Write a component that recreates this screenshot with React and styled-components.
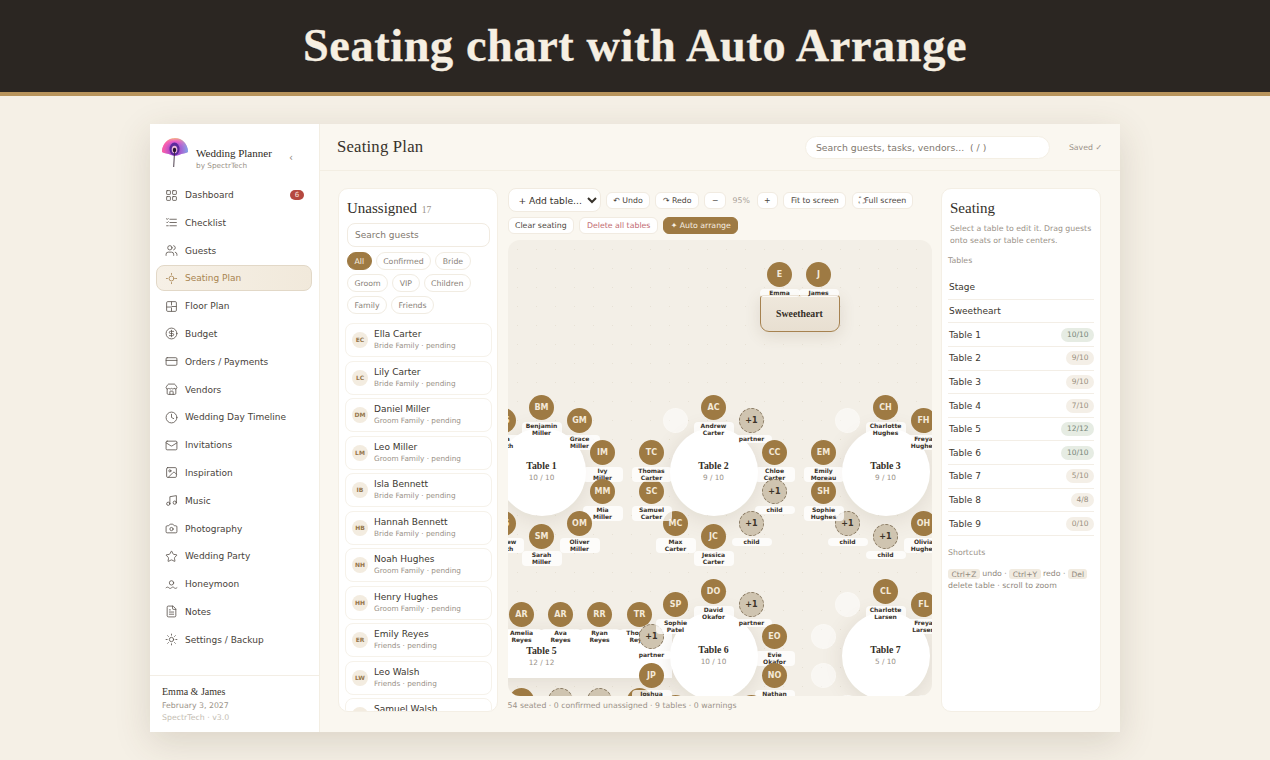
import React from "react";
import styled, { createGlobalStyle } from "styled-components";
import {
  LayoutGrid, Users, CircleDollarSign, CreditCard, Store, Clock, Mail,
  Image, Music, Camera, Star, FileText, Sun,
} from "lucide-react";

const SANS = `"DejaVu Sans", sans-serif`;
const SERIF = `"Liberation Serif", serif`;

const GlobalStyle = createGlobalStyle`
  html, body { margin: 0; padding: 0; background: #f5f0e6; }
  * { box-sizing: border-box; }
  body { font-family: ${SANS}; width: 1270px; height: 760px; overflow: hidden; }
`;

/* small custom icons lucide has no match for */
const ChecklistIcon = (p) => (
  <svg {...p} viewBox="0 0 24 24" fill="none" stroke="currentColor" strokeWidth="1.5" strokeLinecap="round">
    <path d="M9 6h12M9 12h12M9 18h12M3 5l1 1.500L6 4.500M3 11.500l1 1 2-2M3 18h3" />
  </svg>
);
const SeatIcon = (p) => (
  <svg {...p} viewBox="0 0 24 24" fill="none" stroke="currentColor" strokeWidth="1.5" strokeLinecap="round">
    <circle cx="12" cy="12" r="4.500" />
    <path d="M12 2.500v2M12 19.500v2M2.500 12h2M19.500 12h2" />
  </svg>
);
const FloorIcon = (p) => (
  <svg {...p} viewBox="0 0 24 24" fill="none" stroke="currentColor" strokeWidth="1.6">
    <rect x="3" y="3" width="18" height="18" rx="2" />
    <path d="M12 3v7M12 14v7M3 13h9M12 12h9" />
  </svg>
);
const MoonIcon = (p) => (
  <svg {...p} viewBox="0 0 24 24" fill="none" stroke="currentColor" strokeWidth="1.5" strokeLinecap="round">
    <circle cx="12" cy="9" r="4" />
    <path d="M2 18c2-1.600 3.500-1.600 5 0s3.500 1.600 5 0 3.500-1.600 5 0 3 1.600 5 0" />
  </svg>
);
const Logo = () => (
  <svg width="26" height="31" viewBox="0 0 26 31">
    <defs>
      <radialGradient id="fan" cx="50%" cy="70%" r="75%">
        <stop offset="0%" stopColor="#7a2bc0" />
        <stop offset="45%" stopColor="#a44be0" />
        <stop offset="70%" stopColor="#ef62c8" />
        <stop offset="100%" stopColor="#f7d56a" />
      </radialGradient>
      <linearGradient id="side" x1="0" x2="1">
        <stop offset="0%" stopColor="#ff5f9e" stopOpacity=".9" />
        <stop offset="45%" stopColor="#ff5f9e" stopOpacity="0" />
        <stop offset="100%" stopColor="#62b5f0" stopOpacity=".85" />
      </linearGradient>
    </defs>
    <path d="M0 15C0 7 6 1 13 1s13 6 13 14c-3 2-6 1-9 3-2 1-6 1-8 0-3-2-6-1-9-3z" fill="url(#fan)" />
    <path d="M0 15C0 7 6 1 13 1s13 6 13 14c-3 2-6 1-9 3-2 1-6 1-8 0-3-2-6-1-9-3z" fill="url(#side)" />
    <ellipse cx="12.500" cy="12" rx="5" ry="6.500" fill="#5b2a9c" />
    <ellipse cx="12.500" cy="12.500" rx="2.800" ry="3.800" fill="#e9b7d8" />
    <ellipse cx="12.500" cy="13" rx="1.700" ry="2.300" fill="#23132f" />
    <path d="M12.500 15L11.700 30" stroke="#3a2a3a" strokeWidth=".9" fill="none" />
  </svg>
);

const NAV = [
  ["Dashboard", LayoutGrid], ["Checklist", ChecklistIcon], ["Guests", Users], ["Seating Plan", SeatIcon],
  ["Floor Plan", FloorIcon], ["Budget", CircleDollarSign], ["Orders / Payments", CreditCard],
  ["Vendors", Store], ["Wedding Day Timeline", Clock], ["Invitations", Mail], ["Inspiration", Image],
  ["Music", Music], ["Photography", Camera], ["Wedding Party", Star], ["Honeymoon", MoonIcon],
  ["Notes", FileText], ["Settings / Backup", Sun],
];

const CHIPS = [["All", "Confirmed", "Bride"], ["Groom", "VIP", "Children"], ["Family", "Friends"]];

const GUESTS = [
  ["EC", "Ella Carter", "Bride Family"], ["LC", "Lily Carter", "Bride Family"],
  ["DM", "Daniel Miller", "Groom Family"], ["LM", "Leo Miller", "Groom Family"],
  ["IB", "Isla Bennett", "Bride Family"], ["HB", "Hannah Bennett", "Bride Family"],
  ["NH", "Noah Hughes", "Groom Family"], ["HH", "Henry Hughes", "Groom Family"],
  ["ER", "Emily Reyes", "Friends"], ["LW", "Leo Walsh", "Friends"], ["SW", "Samuel Walsh", "Friends"],
];

const TABLE_ROWS = [
  ["Stage"], ["Sweetheart"], ["Table 1", "10/10", 1], ["Table 2", "9/10"], ["Table 3", "9/10"],
  ["Table 4", "7/10"], ["Table 5", "12/12", 1], ["Table 6", "10/10", 1], ["Table 7", "5/10"],
  ["Table 8", "4/8"], ["Table 9", "0/10"],
];

// clockwise from the top, offsets from the table centre
const RING = [[0, -65], [38, -52], [61, -20], [61, 19], [38, 51], [0, 64], [-38, 51], [-62, 19], [-62, -20], [-38, -52]];

const CANVAS_X = 508;
const CANVAS_Y = 240;

// a seat: [initials, label] / ["+1", "partner"] / null for an empty one
const ROUND_TABLES = [
  {
    name: "Table 1", count: "10 / 10", x: 542, y: 472,
    seats: [["BM", "Benjamin\nMiller"], ["GM", "Grace\nMiller"], ["IM", "Ivy\nMiller"], ["MM", "Mia\nMiller"],
      ["OM", "Oliver\nMiller"], ["SM", "Sarah\nMiller"], ["AS", "Andrew\nSmith"], ["LS", "Lena\nSmith"],
      ["KS", "Kate\nSmith"], ["NS", "Ava\nSmith"]],
  },
  {
    name: "Table 2", count: "9 / 10", x: 714, y: 472,
    seats: [["AC", "Andrew\nCarter"], ["+1", "partner"], ["CC", "Chloe\nCarter"], ["+1", "child"], ["+1", "child"],
      ["JC", "Jessica\nCarter"], ["MC", "Max\nCarter"], ["SC", "Samuel\nCarter"], ["TC", "Thomas\nCarter"], null],
  },
  {
    name: "Table 3", count: "9 / 10", x: 886, y: 472,
    seats: [["CH", "Charlotte\nHughes"], ["FH", "Freya\nHughes"], null, null, ["OH", "Olivia\nHughes"],
      ["+1", "child"], ["+1", "child"], ["SH", "Sophie\nHughes"], ["EM", "Emily\nMoreau"], null],
  },
  {
    name: "Table 6", count: "10 / 10", x: 714, y: 656,
    seats: [["DO", "David\nOkafor"], ["+1", "partner"], ["EO", "Evie\nOkafor"], ["NO", "Nathan\nOkafor"],
      ["KO", "Kemi\nOkafor"], ["AP", "Amara\nPatel"], ["LP", "Liam\nPatel"], ["JP", "Joshua\nPatel"],
      ["+1", "partner"], ["SP", "Sophie\nPatel"]],
  },
  {
    name: "Table 7", count: "5 / 10", x: 886, y: 656,
    seats: [["CL", "Charlotte\nLarsen"], ["FL", "Freya\nLarsen"], null, null, null, null, null, null, null, null],
  },
];

const TABLE5_TOP = [[522, "AR", "Amelia\nReyes"], [561, "AR", "Ava\nReyes"], [600, "RR", "Ryan\nReyes"], [640, "TR", "Thomas\nReyes"]];
const TABLE5_BOTTOM = [[522, "BR", ""], [561, "+1", ""], [600, "+1", ""], [640, "LR", ""]];

const SEAT_BROWN = "#9e7a43";

const Page = styled.div`
  width: 1270px;
  height: 760px;
  display: flex;
  flex-direction: column;
`;
const Banner = styled.header`
  height: 96px;
  padding-bottom: 2px;
  background: #2b2622;
  border-bottom: 4px solid #b8945c;
  display: flex;
  align-items: center;
  justify-content: center;
`;
const BannerTitle = styled.h1`
  margin: 0;
  font-family: ${SERIF};
  font-weight: 700;
  font-size: 46.300px;
  letter-spacing: 0.6px;
  color: #f6efe2;
  -webkit-text-stroke: 0.3px #f6efe2;
`;
const Stage = styled.div`
  flex: 1;
  padding: 28px 150px;
`;
const AppWindow = styled.div`
  height: 608px;
  display: flex;
  background: #faf7f0;
  box-shadow: 0 10px 34px rgba(80, 62, 36, 0.16);
  overflow: hidden;
`;
const Sidebar = styled.aside`
  width: 170px;
  flex: none;
  background: #fff;
  border-right: 1px solid #f3eee3;
  display: flex;
  flex-direction: column;
`;
const Brand = styled.div`
  height: 58px;
  padding: 13px 0 0 12px;
  display: flex;
  align-items: flex-start;
`;
const BrandText = styled.div`
  margin: 10px 0 0 8px;
  width: 87px;
`;
const BrandName = styled.div`
  font-family: ${SERIF};
  font-size: 11px;
  line-height: 13px;
  color: #2e2923;
  white-space: nowrap;
`;
const BrandSub = styled.div`
  font-size: 7.300px;
  line-height: 11px;
  color: #9a9288;
`;
const Collapse = styled.span`
  margin: 15px 0 0 6px;
  font-size: 10px;
  color: #8f877c;
`;
const Nav = styled.nav`
  flex: 1;
  padding: 0 7px 0 6px;
  display: flex;
  flex-direction: column;
  gap: 1.800px;
`;
const NavItem = styled.div`
  height: 26px;
  flex: none;
  display: flex;
  align-items: center;
  gap: 7px;
  padding: 0 8px;
  font-size: 9px;
  border-radius: 8px;
  border: 1px solid ${(p) => (p.$active ? "#e2d8c7" : "transparent")};
  background: ${(p) => (p.$active ? "linear-gradient(90deg, #f6f0e6, #f1e9db)" : "transparent")};
  color: ${(p) => (p.$active ? "#a88450" : "#48423a")};
  svg { width: 13px; height: 13px; flex: none; stroke-width: 1.5; color: ${(p) => (p.$active ? "#a88450" : "#57504a")}; }
`;
const NavBadge = styled.span`
  margin-left: auto;
  margin-right: -1px;
  width: 14px;
  height: 10px;
  border-radius: 6px;
  background: #b5483f;
  color: #f8e3dc;
  font-size: 7px;
  line-height: 10px;
  text-align: center;
`;
const SideFoot = styled.div`
  height: 57px;
  flex: none;
  border-top: 1px solid #f3eee5;
  padding: 9px 12px 0;
`;
const Couple = styled.div`
  font-family: ${SERIF};
  font-size: 10px;
  line-height: 13px;
  margin-bottom: 1.500px;
  color: #3a342c;
`;
const FootLine = styled.div`
  font-size: 7.800px;
  line-height: 12px;
  color: ${(p) => (p.$faint ? "#c4bdb2" : "#9a9288")};
`;
const Main = styled.main`
  flex: 1;
  display: flex;
  flex-direction: column;
  min-width: 0;
`;
const TopBar = styled.div`
  height: 47px;
  flex: none;
  padding: 0 18px 0 17px;
  border-bottom: 1px solid #f3eee3;
  display: flex;
  align-items: center;
`;
const PageTitle = styled.h2`
  margin: 0;
  font-family: ${SERIF};
  font-weight: 400;
  font-size: 16.700px;
  color: #37322b;
  letter-spacing: 0.2px;
`;
const TopSearch = styled.input`
  margin-left: auto;
  width: 245px;
  height: 23px;
  border-radius: 12px;
  border: 1px solid #f4efe4;
  background: #fff;
  padding: 0 10px;
  font: 9.300px ${SANS};
  outline: 0;
  &::placeholder { color: #7f786e; opacity: 1; }
`;
const Saved = styled.span`
  margin-left: 19px;
  font-size: 7.800px;
  color: #9a9288;
  white-space: nowrap;
`;
const Body = styled.div`
  flex: 1;
  min-height: 0;
  padding: 17px 19px 20px 18px;
  display: grid;
  grid-template-columns: 160px 424px 160px;
  column-gap: 9.500px;
`;
const Panel = styled.section`
  background: #fff;
  border: 1px solid #f4efe5;
  border-radius: 10px;
  overflow: hidden;
  min-height: 0;
`;
const GuestPanel = styled(Panel)`
  padding: 10px 5px 0 6px;
`;
const PanelTitle = styled.h3`
  margin: 0;
  padding-left: ${(p) => p.$pad || 0}px;
  font-family: ${SERIF};
  font-weight: 400;
  font-size: 15px;
  line-height: 18px;
  color: #33302a;
  small { font-size: 9.500px; color: #9a9288; margin-left: 1px; }
`;
const GuestSearch = styled.input`
  display: block;
  margin: 4px 2px 0 2px;
  width: 143px;
  height: 24px;
  border: 1px solid #f1ebe1;
  border-radius: 8px;
  padding: 0 7px;
  font: 9px ${SANS};
  outline: 0;
  &::placeholder { color: #7f786e; opacity: 1; }
`;
const ChipRows = styled.div`
  margin: 5px 2px 0 2px;
  display: flex;
  flex-direction: column;
  gap: 4px;
`;
const ChipRow = styled.div`
  display: flex;
  gap: 4px;
`;
const Chip = styled.span`
  height: 18px;
  padding: 0 6.500px;
  border-radius: 9px;
  font-size: 7.800px;
  line-height: 17px;
  border: 1px solid ${(p) => (p.$active ? SEAT_BROWN : "#f1ecE2")};
  background: ${(p) => (p.$active ? SEAT_BROWN : "#fff")};
  color: ${(p) => (p.$active ? "#f7efe2" : "#8a8379")};
`;
const GuestList = styled.div`
  margin-top: 9px;
  display: flex;
  flex-direction: column;
  gap: 3.500px;
`;
const GuestCard = styled.div`
  height: 34px;
  flex: none;
  border: 1px solid #f6f2ea;
  border-radius: 8px;
  padding: 0 6px;
  display: flex;
  align-items: center;
  gap: 6px;
`;
const GuestAvatar = styled.span`
  width: 16px;
  height: 16px;
  flex: none;
  border-radius: 50%;
  background: #f3ece0;
  color: #95764a;
  font-size: 6px;
  font-weight: 700;
  line-height: 16px;
  text-align: center;
`;
const GuestName = styled.div`
  font-size: 9px;
  line-height: 12px;
  color: #3c372f;
`;
const GuestMeta = styled.div`
  font-size: 7.300px;
  line-height: 12px;
  color: #9a9288;
`;
const Center = styled.div`
  display: flex;
  flex-direction: column;
  min-height: 0;
`;
const ToolRow = styled.div`
  display: flex;
  align-items: center;
  gap: 5.300px;
  height: ${(p) => p.$h}px;
  margin-bottom: ${(p) => p.$mb || 0}px;
  flex: none;
`;
const AddSelect = styled.select`
  width: 93px;
  height: 24px;
  border: 1px solid #f1ebe1;
  border-radius: 8px;
  background: #fff;
  color: #37322b;
  padding: 0 0 0 6px;
  font: 9.200px ${SANS};
  outline: 0;
`;
const ToolButton = styled.span`
  height: 17px;
  padding: 0 ${(p) => p.$pad ?? 6.500}px;
  border-radius: 6px;
  border: 1px solid ${(p) => (p.$primary ? SEAT_BROWN : "#f1ebe1")};
  background: ${(p) => (p.$primary ? SEAT_BROWN : "#fff")};
  color: ${(p) => (p.$primary ? "#f7efe2" : p.$danger ? "#bf6a70" : "#4b453c")};
  font-size: 7.800px;
  line-height: 15px;
  white-space: nowrap;
`;
const Zoom = styled.span`
  font-size: 7.800px;
  color: #aaa39a;
  width: 20px;
  text-align: center;
`;
const Canvas = styled.div`
  position: relative;
  height: 456px;
  flex: none;
  border-radius: 12px;
  overflow: hidden;
  background-color: #f3efe7;
  background-image: radial-gradient(rgba(160, 140, 105, 0.14) 0.7px, transparent 0.8px);
  background-size: 19px 19px;
`;
const RoundTable = styled.div`
  position: absolute;
  left: ${(p) => p.$x - 44}px;
  top: ${(p) => p.$y - 44}px;
  width: 88px;
  height: 88px;
  border-radius: 50%;
  background: #fff;
  box-shadow: 0 3px 22px rgba(105, 85, 55, 0.14);
  display: flex;
  flex-direction: column;
  align-items: center;
  justify-content: center;
`;
const RectTable = styled.div`
  position: absolute;
  left: -60px;
  top: 390px;
  width: 224px;
  height: 48px;
  background: #fff;
  box-shadow: 0 3px 22px rgba(105, 85, 55, 0.12);
`;
const Table5Text = styled.div`
  position: absolute;
  left: 60px;
  top: 17px;
  width: 68px;
  text-align: center;
`;
const HeadTable = styled.div`
  position: absolute;
  left: 252px;
  top: 55px;
  width: 80px;
  height: 37px;
  border-radius: 3px 3px 9px 9px;
  border: 1.500px solid #a68250;
  background: linear-gradient(180deg, #efe8dc, #e8dfd1);
  box-shadow: 0 4px 16px rgba(105, 85, 55, 0.14);
  font-family: ${SERIF};
  font-weight: 700;
  font-size: 9.800px;
  color: #352f27;
  display: flex;
  align-items: center;
  justify-content: center;
`;
const TableName = styled.div`
  font-family: ${SERIF};
  font-weight: 700;
  font-size: 9.800px;
  line-height: 12px;
  margin-top: -2px;
  color: #352f27;
`;
const TableCount = styled.div`
  font-size: 7.300px;
  line-height: 11px;
  color: #9a9288;
`;
const Seat = styled.div`
  position: absolute;
  left: ${(p) => p.$x - 12.500}px;
  top: ${(p) => p.$y - 12.500}px;
  width: 25px;
  height: 25px;
  border-radius: 50%;
  font-size: 8px;
  font-weight: 700;
  text-align: center;
  background: ${(p) => (p.$kind === "plus" ? "#cfc4b0" : p.$kind === "empty" ? "rgba(255,255,255,.5)" : SEAT_BROWN)};
  color: ${(p) => (p.$kind === "plus" ? "#3b3328" : "#f4e9d8")};
  border: ${(p) => (p.$kind === "plus" ? "1px dashed #84745c" : p.$kind === "empty" ? "1.5px dashed #fbf9f5" : "none")};
  line-height: ${(p) => (p.$kind === "guest" ? 25 : 23)}px;
`;
const SeatLabel = styled.div`
  position: absolute;
  left: ${(p) => p.$x - 20}px;
  top: ${(p) => p.$y + 14.500}px;
  width: 40px;
  padding: 0.500px 0;
  border-radius: 4px;
  background: rgba(255, 255, 255, 0.78);
  font-size: 6px;
  font-weight: 700;
  line-height: 7px;
  color: #38322a;
  text-align: center;
  white-space: pre-line;
`;
const Status = styled.div`
  margin-top: 5px;
  font-size: 7.800px;
  line-height: 10px;
  color: #9a9288;
`;
const SidePanel = styled(Panel)`
  padding: 10px 6px 0 6px;
`;
const SideHelp = styled.p`
  margin: 6px 0 0 2px;
  font-size: 7.800px;
  line-height: 11.500px;
  color: #9a9288;
`;
const SectionLabel = styled.div`
  font-size: 7.800px;
  line-height: 10px;
  color: #9a9288;
  margin-top: ${(p) => p.$mt}px;
`;
const TableList = styled.div`
  margin-top: 10px;
`;
const TableRow = styled.div`
  height: 23.650px;
  border-bottom: 1px solid #f3eee6;
  padding: 0 0 0 1px;
  display: flex;
  align-items: center;
  justify-content: space-between;
  font-size: 9px;
  color: #3c372f;
`;
const CountPill = styled.span`
  height: 14px;
  padding: 0 5.500px;
  border-radius: 7px;
  background: ${(p) => (p.$full ? "#e6ece3" : "#f4efe7")};
  color: ${(p) => (p.$full ? "#76867a" : "#9a8f80")};
  font-size: 7.500px;
  line-height: 14px;
`;
const Shortcuts = styled.p`
  margin: 10px 0 0 0;
  font-size: 7.800px;
  line-height: 12px;
  color: #8f887d;
`;
const Key = styled.kbd`
  font-family: ${SANS};
  font-size: 7.500px;
  padding: 0.500px 3.500px;
  border-radius: 3px;
  background: #f1ebe0;
  color: #8f887d;
`;

function seatKind(s) {
  if (!s) return "empty";
  return s[0] === "+1" ? "plus" : "guest";
}

function PlacedSeat({ x, y, seat }) {
  const kind = seatKind(seat);
  return (
    <>
      <Seat $x={x} $y={y} $kind={kind}>{seat && seat[0]}</Seat>
      {seat && seat[1] && <SeatLabel $x={x} $y={y}>{seat[1]}</SeatLabel>}
    </>
  );
}

function Round({ table }) {
  const cx = table.x - CANVAS_X;
  const cy = table.y - CANVAS_Y;
  return (
    <>
      <RoundTable $x={cx} $y={cy}>
        <TableName>{table.name}</TableName>
        <TableCount>{table.count}</TableCount>
      </RoundTable>
      {table.seats.map((s, i) => (
        <PlacedSeat key={i} x={cx + RING[i][0]} y={cy + RING[i][1]} seat={s} />
      ))}
    </>
  );
}

function SeatingCanvas() {
  const [t1, t2, t3, t6, t7] = ROUND_TABLES;
  return (
    <Canvas>
      <Seat $x={272} $y={34} $kind="guest">E</Seat>
      <Seat $x={311} $y={34} $kind="guest">J</Seat>
      <HeadTable>Sweetheart</HeadTable>
      <SeatLabel $x={272} $y={34}>Emma</SeatLabel>
      <SeatLabel $x={311} $y={34}>James</SeatLabel>
      <Round table={t1} />
      <Round table={t2} />
      <Round table={t3} />
      <RectTable>
        <Table5Text>
          <TableName>Table 5</TableName>
          <TableCount>12 / 12</TableCount>
        </Table5Text>
      </RectTable>
      {TABLE5_TOP.map(([x, ini, label], i) => (
        <PlacedSeat key={i} x={x - CANVAS_X} y={374} seat={[ini, label]} />
      ))}
      {TABLE5_BOTTOM.map(([x, ini, label], i) => (
        <PlacedSeat key={i} x={x - CANVAS_X} y={460} seat={[ini, label]} />
      ))}
      <Round table={t6} />
      <Round table={t7} />
    </Canvas>
  );
}

export default function App() {
  return (
    <Page>
      <GlobalStyle />
      <Banner>
        <BannerTitle>Seating chart with Auto Arrange</BannerTitle>
      </Banner>
      <Stage>
        <AppWindow>
          <Sidebar>
            <Brand>
              <Logo />
              <BrandText>
                <BrandName>Wedding Planner</BrandName>
                <BrandSub>by SpectrTech</BrandSub>
              </BrandText>
              <Collapse>‹</Collapse>
            </Brand>
            <Nav>
              {NAV.map(([label, Icon]) => (
                <NavItem key={label} $active={label === "Seating Plan"}>
                  <Icon />
                  {label}
                  {label === "Dashboard" && <NavBadge>6</NavBadge>}
                </NavItem>
              ))}
            </Nav>
            <SideFoot>
              <Couple>Emma &amp; James</Couple>
              <FootLine>February 3, 2027</FootLine>
              <FootLine $faint>SpectrTech · v3.0</FootLine>
            </SideFoot>
          </Sidebar>
          <Main>
            <TopBar>
              <PageTitle>Seating Plan</PageTitle>
              <TopSearch placeholder="Search guests, tasks, vendors...  ( / )" />
              <Saved>Saved ✓</Saved>
            </TopBar>
            <Body>
              <GuestPanel>
                <PanelTitle $pad={2}>Unassigned <small>17</small></PanelTitle>
                <GuestSearch placeholder="Search guests" />
                <ChipRows>
                  {CHIPS.map((row, i) => (
                    <ChipRow key={i}>
                      {row.map((c) => <Chip key={c} $active={c === "All"}>{c}</Chip>)}
                    </ChipRow>
                  ))}
                </ChipRows>
                <GuestList>
                  {GUESTS.map(([ini, name, group]) => (
                    <GuestCard key={name}>
                      <GuestAvatar>{ini}</GuestAvatar>
                      <div>
                        <GuestName>{name}</GuestName>
                        <GuestMeta>{group} · pending</GuestMeta>
                      </div>
                    </GuestCard>
                  ))}
                </GuestList>
              </GuestPanel>
              <Center>
                <ToolRow $h={24} $mb={4.500}>
                  <AddSelect defaultValue="add">
                    <option value="add">+ Add table...</option>
                  </AddSelect>
                  <ToolButton>↶ Undo</ToolButton>
                  <ToolButton>↷ Redo</ToolButton>
                  <ToolButton>−</ToolButton>
                  <Zoom>95%</Zoom>
                  <ToolButton>+</ToolButton>
                  <ToolButton>Fit to screen</ToolButton>
                  <ToolButton $pad={6}>⛶Full screen</ToolButton>
                </ToolRow>
                <ToolRow $h={17} $mb={6.500}>
                  <ToolButton>Clear seating</ToolButton>
                  <ToolButton $danger>Delete all tables</ToolButton>
                  <ToolButton $primary>✦ Auto arrange</ToolButton>
                </ToolRow>
                <SeatingCanvas />
                <Status>54 seated · 0 confirmed unassigned · 9 tables · 0 warnings</Status>
              </Center>
              <SidePanel>
                <PanelTitle $pad={2}>Seating</PanelTitle>
                <SideHelp>Select a table to edit it. Drag guests onto seats or table centers.</SideHelp>
                <SectionLabel $mt={10}>Tables</SectionLabel>
                <TableList>
                  {TABLE_ROWS.map(([name, count, full]) => (
                    <TableRow key={name}>
                      {name}
                      {count && <CountPill $full={full}>{count}</CountPill>}
                    </TableRow>
                  ))}
                </TableList>
                <SectionLabel $mt={12}>Shortcuts</SectionLabel>
                <Shortcuts>
                  <Key>Ctrl+Z</Key> undo · <Key>Ctrl+Y</Key> redo · <Key>Del</Key> delete table · scroll to zoom
                </Shortcuts>
              </SidePanel>
            </Body>
          </Main>
        </AppWindow>
      </Stage>
    </Page>
  );
}
